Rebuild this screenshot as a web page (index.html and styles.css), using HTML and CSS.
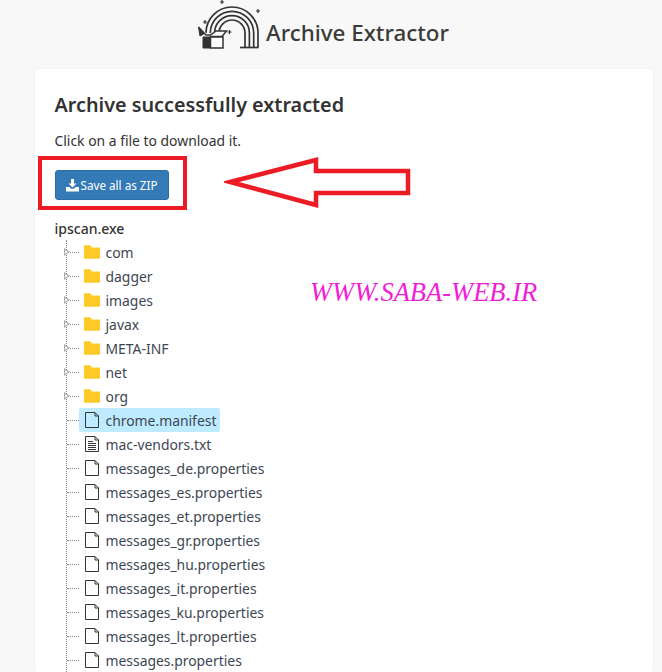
FILE: index.html
```html
<!DOCTYPE html>
<html lang="en">
<head>
  <meta charset="UTF-8" />
  <title>Archive Extractor</title>
  <link rel="stylesheet" href="styles.css">
</head>
<body>
  <header class="site-header">
    <svg class="logo" width="62" height="50" viewBox="0 0 62 50" fill="none" stroke="#333" stroke-width="1.7">
      <path d="M8 33A26 26 0 0 1 60 33V47.500"/>
      <path d="M12.300 33A21.700 21.700 0 0 1 55.700 33V47.500"/>
      <path d="M16.600 33A17.400 17.400 0 0 1 51.400 33V47.500"/>
      <path d="M21 33A13 13 0 0 1 47 33V47.500"/>
      <path d="M42 47.500H60.500"/>
      <path d="M0.500 27L6.500 33.500L2 36L0.500 27Z" fill="#333" stroke-width="1"/>
      <path d="M0.500 27L8 35H12.500L18 31H28.500L24 36.500H12.500" fill="#fff" stroke-width="1.5"/>
      <path d="M5 37H12.500V48H5Z" fill="#333" stroke-width="1"/>
      <path d="M12.500 37H25V48H12.500Z" fill="#fff" stroke-width="1.500"/>
      <path d="M24 0v4M22 2h4M60 9v4M58 11h4M7 20v4M5 22h4M31.500 30v4M29.500 32h4" stroke-width="1.200"/>
    </svg>
    <h1 class="site-title">Archive Extractor</h1>
  </header>

  <main class="card">
    <h2 class="card-title">Archive successfully extracted</h2>
    <p class="hint">Click on a file to download it.</p>

    <button class="zip-btn" type="button">
      <svg width="13" height="13" viewBox="0 0 13 13" fill="#fff">
        <path d="M5 0H8V4.500H10.500L6.500 8.500L2.500 4.500H5Z"/>
        <path d="M0 8H3.500L5 9.800H8L9.500 8H13V12.500H0Z"/>
      </svg>
      Save all as ZIP
    </button>

    <div class="tree-root">ipscan.exe</div>
    <ul class="tree">
      <li class="row"><i class="toggle"></i><svg class="ico" viewBox="0 0 16 16"><use href="#folder"/></svg>com</li>
      <li class="row"><i class="toggle"></i><svg class="ico" viewBox="0 0 16 16"><use href="#folder"/></svg>dagger</li>
      <li class="row"><i class="toggle"></i><svg class="ico" viewBox="0 0 16 16"><use href="#folder"/></svg>images</li>
      <li class="row"><i class="toggle"></i><svg class="ico" viewBox="0 0 16 16"><use href="#folder"/></svg>javax</li>
      <li class="row"><i class="toggle"></i><svg class="ico" viewBox="0 0 16 16"><use href="#folder"/></svg>META-INF</li>
      <li class="row"><i class="toggle"></i><svg class="ico" viewBox="0 0 16 16"><use href="#folder"/></svg>net</li>
      <li class="row"><i class="toggle"></i><svg class="ico" viewBox="0 0 16 16"><use href="#folder"/></svg>org</li>
      <li class="row"><span class="label selected"><svg class="ico" viewBox="0 0 16 16"><use href="#file"/></svg>chrome.manifest</span></li>
      <li class="row"><svg class="ico" viewBox="0 0 16 16"><use href="#file"/><use href="#lines"/></svg>mac-vendors.txt</li>
      <li class="row"><svg class="ico" viewBox="0 0 16 16"><use href="#file"/></svg>messages_de.properties</li>
      <li class="row"><svg class="ico" viewBox="0 0 16 16"><use href="#file"/></svg>messages_es.properties</li>
      <li class="row"><svg class="ico" viewBox="0 0 16 16"><use href="#file"/></svg>messages_et.properties</li>
      <li class="row"><svg class="ico" viewBox="0 0 16 16"><use href="#file"/></svg>messages_gr.properties</li>
      <li class="row"><svg class="ico" viewBox="0 0 16 16"><use href="#file"/></svg>messages_hu.properties</li>
      <li class="row"><svg class="ico" viewBox="0 0 16 16"><use href="#file"/></svg>messages_it.properties</li>
      <li class="row"><svg class="ico" viewBox="0 0 16 16"><use href="#file"/></svg>messages_ku.properties</li>
      <li class="row"><svg class="ico" viewBox="0 0 16 16"><use href="#file"/></svg>messages_lt.properties</li>
      <li class="row"><svg class="ico" viewBox="0 0 16 16"><use href="#file"/></svg>messages.properties</li>
    </ul>
  </main>

  <!-- annotations drawn over the screenshot -->
  <div class="red-box"></div>
  <svg class="red-arrow" width="190" height="56" viewBox="0 0 190 56" fill="#fff" stroke="#ed1c24" stroke-width="4.5">
    <path d="M6 27L92 5V16H184V38H92V50Z"/>
  </svg>
  <div class="watermark">WWW.SABA-WEB.IR</div>

  <svg class="defs" width="0" height="0">
    <defs>
      <path id="folder" d="M0 2.500C0 1.800.5 1.300 1.200 1.300H6L8 3.500H15C15.600 3.500 16 3.900 16 4.500V13.500C16 14.200 15.600 14.700 15 14.700H1C.4 14.700 0 14.200 0 13.500Z" fill="#ffca28"/>
      <path id="file" d="M1.500.5H11L14.500 4V15.500H1.500ZM11 .5V4H14.500" fill="none" stroke="#333" stroke-width="1"/>
      <path id="lines" d="M4 5.500H9M4 7.500H12M4 9.500H12M4 11.500H12M4 13.500H12" fill="none" stroke="#333" stroke-width="1"/>
    </defs>
  </svg>
</body>
</html>
```

FILE: styles.css
```css
html, body {
  margin: 0;
  padding: 0;
}

body {
  position: relative;
  height: 672px;
  overflow: hidden;
  background: #f8f8f8;
  font-family: "Noto Sans", "Open Sans", sans-serif;
  color: #333;
}

.site-header {
  display: flex;
  justify-content: center;
  align-items: flex-start;
  gap: 6px;
  height: 69px;
  padding-right: 15px;
  box-sizing: border-box;
}

.logo {
  display: block;
}

.site-title {
  margin: 18px 0 0;
  font-size: 22.4px;
  line-height: 30px;
  font-weight: 500;
  color: #3a3a3a;
}

.card {
  margin: 0 9px 0 35px;
  padding: 22px 19.5px 0;
  height: 603px;
  box-sizing: border-box;
  background: #fff;
  border-radius: 4px;
  box-shadow: 0 0 0 1px #f3f5fb;
}

.card-title {
  margin: 0;
  font-size: 19.8px;
  line-height: 28px;
  font-weight: 600;
  color: #333;
}

.hint {
  margin: 12px 0 0;
  font-size: 13.9px;
  line-height: 20px;
}

.zip-btn {
  display: flex;
  align-items: center;
  gap: 2px;
  margin-top: 19px;
  padding: 0 10px;
  height: 30px;
  background: #337ab7;
  border: 1px solid #2e6da4;
  border-radius: 3px;
  color: #fff;
  font-family: inherit;
  font-size: 11.7px;
}

.tree-root {
  margin-top: 19px;
  font-size: 14px;
  line-height: 20px;
  font-weight: 500;
}

.tree {
  list-style: none;
  margin: 1px 0 0 11.5px;
  padding: 0;
  border-left: 1px dotted #888;
}

.row {
  position: relative;
  display: flex;
  align-items: center;
  height: 24px;
  padding-left: 17px;
  font-size: 13.9px;
  color: #3d4652;
}

.row::before {
  content: "";
  position: absolute;
  left: 0;
  top: 12px;
  width: 12px;
  border-top: 1px dotted #888;
}

/* hollow expand arrow sitting on the dotted line */
.toggle {
  position: absolute;
  left: -3px;
  top: 8px;
  width: 6px;
  height: 9px;
}

.toggle::before,
.toggle::after {
  content: "";
  position: absolute;
  border-style: solid;
  border-color: transparent;
}

.toggle::before {
  left: 0;
  top: 0;
  border-width: 4.5px 0 4.5px 6px;
  border-left-color: #aaa;
}

.toggle::after {
  left: 1px;
  top: 2px;
  border-width: 2.5px 0 2.5px 3.5px;
  border-left-color: #fff;
}

.ico {
  width: 16px;
  height: 16px;
  margin-right: 5.5px;
  flex: none;
}

.label {
  display: flex;
  align-items: center;
  height: 24px;
}

.selected {
  background: #beebff;
  margin-left: -5px;
  padding: 0 4px 0 5px;
  border-radius: 2px;
}

.red-box {
  position: absolute;
  left: 38px;
  top: 156px;
  width: 141px;
  height: 46px;
  border: 4px solid #ed1c24;
}

.red-arrow {
  position: absolute;
  left: 224px;
  top: 155px;
}

.watermark {
  position: absolute;
  left: 310px;
  top: 277px;
  font-family: "Liberation Serif", serif;
  font-style: italic;
  font-size: 26.5px;
  line-height: 30px;
  color: #ee1ed8;
  white-space: nowrap;
}

.defs {
  position: absolute;
}
```
